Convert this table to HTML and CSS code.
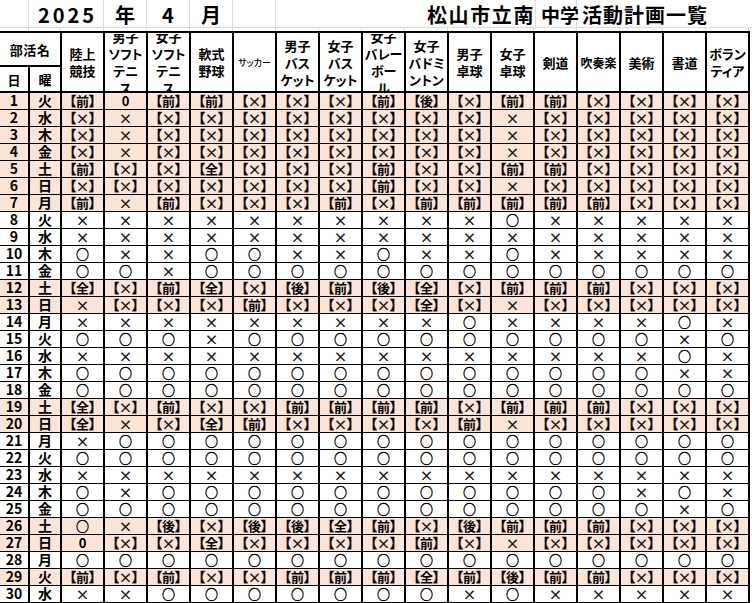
FILE: index.html
```html
<!DOCTYPE html>
<html lang="ja">
<head>
<meta charset="utf-8">
<title>松山市立南中学 活動計画一覧</title>
<link rel="stylesheet" href="styles.css">
</head>
<body>
<div class="title">
  <div></div>
  <div class="yr">2025</div>
  <div>年</div>
  <div>4</div>
  <div>月</div>
  <div></div>
  <div class="school">松山市立南</div>
  <div class="mid">中学</div>
  <div class="plan-name">活動計画一覧</div>
</div>
<div class="spacer"><div></div><div></div><div></div><div></div><div></div><div></div><div></div><div></div><div></div><div></div><div></div><div></div><div></div><div></div><div></div><div></div><div></div><div></div></div>
<table class="plan">
<colgroup><col class="c-day"><col class="c-wd"><col span="16" class="c-club"></colgroup>
<thead>
<tr class="r1">
<th colspan="2" class="club-label">部活名</th>
<th rowspan="2"><div class="h"><span>陸上<br>競技</span></div></th>
<th rowspan="2"><div class="h"><span>男子<br>ソフト<br>テニ<br>ス</span></div></th>
<th rowspan="2"><div class="h"><span>女子<br>ソフト<br>テニ<br>ス</span></div></th>
<th rowspan="2"><div class="h"><span>軟式<br>野球</span></div></th>
<th rowspan="2"><div class="h"><span class="tiny">サッカー</span></div></th>
<th rowspan="2"><div class="h"><span>男子<br>バス<br>ケット</span></div></th>
<th rowspan="2"><div class="h"><span>女子<br>バス<br>ケット</span></div></th>
<th rowspan="2"><div class="h"><span>女子<br>バレー<br>ボー<br>ル</span></div></th>
<th rowspan="2"><div class="h"><span>女子<br>バドミ<br>ントン</span></div></th>
<th rowspan="2"><div class="h"><span>男子<br>卓球</span></div></th>
<th rowspan="2"><div class="h"><span>女子<br>卓球</span></div></th>
<th rowspan="2"><div class="h"><span>剣道</span></div></th>
<th rowspan="2"><div class="h"><span class="small">吹奏楽</span></div></th>
<th rowspan="2"><div class="h"><span>美術</span></div></th>
<th rowspan="2"><div class="h"><span>書道</span></div></th>
<th rowspan="2"><div class="h"><span>ボラン<br>ティア</span></div></th>
</tr>
<tr class="r2"><th>日</th><th>曜</th></tr>
</thead>
<tbody>
<tr class="hol"><td class="d">1</td><td class="d">火</td><td>【<b>前</b>】</td><td><b>0</b></td><td>【<b>前</b>】</td><td>【<b>前</b>】</td><td>【×】</td><td>【×】</td><td>【×】</td><td>【<b>前</b>】</td><td>【<b>後</b>】</td><td>【×】</td><td>【<b>前</b>】</td><td>【<b>前</b>】</td><td>【×】</td><td>【×】</td><td>【×】</td><td>【×】</td></tr>
<tr class="hol"><td class="d">2</td><td class="d">水</td><td>【×】</td><td>×</td><td>【×】</td><td>【×】</td><td>【×】</td><td>【×】</td><td>【×】</td><td>【×】</td><td>【×】</td><td>【×】</td><td>×</td><td>【×】</td><td>【×】</td><td>【×】</td><td>【×】</td><td>【×】</td></tr>
<tr class="hol"><td class="d">3</td><td class="d">木</td><td>【×】</td><td>×</td><td>【×】</td><td>【×】</td><td>【×】</td><td>【×】</td><td>【×】</td><td>【×】</td><td>【×】</td><td>【×】</td><td>×</td><td>【×】</td><td>【×】</td><td>【×】</td><td>【×】</td><td>【×】</td></tr>
<tr class="hol"><td class="d">4</td><td class="d">金</td><td>【×】</td><td>×</td><td>【×】</td><td>【×】</td><td>【×】</td><td>【×】</td><td>【×】</td><td>【×】</td><td>【×】</td><td>【×】</td><td>×</td><td>【×】</td><td>【×】</td><td>【×】</td><td>【×】</td><td>【×】</td></tr>
<tr class="hol"><td class="d">5</td><td class="d">土</td><td>【<b>前</b>】</td><td>【×】</td><td>【×】</td><td>【<b>全</b>】</td><td>【×】</td><td>【×】</td><td>【×】</td><td>【<b>前</b>】</td><td>【×】</td><td>【×】</td><td>【<b>前</b>】</td><td>【<b>前</b>】</td><td>【×】</td><td>【×】</td><td>【×】</td><td>【×】</td></tr>
<tr class="hol"><td class="d">6</td><td class="d">日</td><td>【×】</td><td>【×】</td><td>【×】</td><td>【×】</td><td>【×】</td><td>【×】</td><td>【×】</td><td>【<b>前</b>】</td><td>【×】</td><td>【×】</td><td>×</td><td>【×】</td><td>【×】</td><td>【×】</td><td>【×】</td><td>【×】</td></tr>
<tr class="hol"><td class="d">7</td><td class="d">月</td><td>【<b>前</b>】</td><td>×</td><td>【<b>前</b>】</td><td>【×】</td><td>【×】</td><td>【×】</td><td>【<b>前</b>】</td><td>【×】</td><td>【<b>前</b>】</td><td>【<b>前</b>】</td><td>【<b>前</b>】</td><td>【<b>前</b>】</td><td>【<b>前</b>】</td><td>【×】</td><td>【×】</td><td>【×】</td></tr>
<tr><td class="d">8</td><td class="d">火</td><td>×</td><td>×</td><td>×</td><td>×</td><td>×</td><td>×</td><td>×</td><td>×</td><td>×</td><td>×</td><td>○</td><td>×</td><td>×</td><td>×</td><td>×</td><td>×</td></tr>
<tr><td class="d">9</td><td class="d">水</td><td>×</td><td>×</td><td>×</td><td>×</td><td>×</td><td>×</td><td>×</td><td>×</td><td>×</td><td>×</td><td>×</td><td>×</td><td>×</td><td>×</td><td>×</td><td>×</td></tr>
<tr><td class="d">10</td><td class="d">木</td><td>○</td><td>×</td><td>×</td><td>○</td><td>○</td><td>×</td><td>×</td><td>○</td><td>×</td><td>×</td><td>○</td><td>×</td><td>×</td><td>×</td><td>×</td><td>×</td></tr>
<tr><td class="d">11</td><td class="d">金</td><td>○</td><td>○</td><td>×</td><td>○</td><td>○</td><td>○</td><td>○</td><td>○</td><td>○</td><td>○</td><td>○</td><td>○</td><td>○</td><td>○</td><td>○</td><td>○</td></tr>
<tr class="hol"><td class="d">12</td><td class="d">土</td><td>【<b>全</b>】</td><td>【×】</td><td>【<b>前</b>】</td><td>【<b>全</b>】</td><td>【×】</td><td>【<b>後</b>】</td><td>【<b>前</b>】</td><td>【<b>後</b>】</td><td>【<b>全</b>】</td><td>【×】</td><td>【<b>前</b>】</td><td>【<b>前</b>】</td><td>【<b>前</b>】</td><td>【×】</td><td>【×】</td><td>【×】</td></tr>
<tr class="hol"><td class="d">13</td><td class="d">日</td><td>×</td><td>【×】</td><td>【×】</td><td>【×】</td><td>【<b>前</b>】</td><td>【×】</td><td>【×】</td><td>【×】</td><td>【<b>全</b>】</td><td>【×】</td><td>×</td><td>【×】</td><td>【×】</td><td>【×】</td><td>【×】</td><td>【×】</td></tr>
<tr><td class="d">14</td><td class="d">月</td><td>×</td><td>×</td><td>×</td><td>×</td><td>×</td><td>×</td><td>×</td><td>×</td><td>×</td><td>○</td><td>×</td><td>×</td><td>×</td><td>×</td><td>○</td><td>×</td></tr>
<tr><td class="d">15</td><td class="d">火</td><td>○</td><td>○</td><td>○</td><td>×</td><td>○</td><td>○</td><td>○</td><td>○</td><td>○</td><td>○</td><td>○</td><td>○</td><td>○</td><td>○</td><td>×</td><td>○</td></tr>
<tr><td class="d">16</td><td class="d">水</td><td>×</td><td>×</td><td>×</td><td>×</td><td>×</td><td>×</td><td>×</td><td>×</td><td>×</td><td>×</td><td>×</td><td>×</td><td>×</td><td>×</td><td>○</td><td>×</td></tr>
<tr><td class="d">17</td><td class="d">木</td><td>○</td><td>○</td><td>○</td><td>○</td><td>○</td><td>○</td><td>○</td><td>○</td><td>○</td><td>○</td><td>○</td><td>○</td><td>○</td><td>○</td><td>×</td><td>×</td></tr>
<tr><td class="d">18</td><td class="d">金</td><td>○</td><td>○</td><td>○</td><td>○</td><td>○</td><td>○</td><td>○</td><td>○</td><td>○</td><td>○</td><td>○</td><td>○</td><td>○</td><td>○</td><td>○</td><td>○</td></tr>
<tr class="hol"><td class="d">19</td><td class="d">土</td><td>【<b>全</b>】</td><td>【×】</td><td>【<b>前</b>】</td><td>【×】</td><td>【×】</td><td>【<b>前</b>】</td><td>【<b>前</b>】</td><td>【<b>前</b>】</td><td>【<b>前</b>】</td><td>【×】</td><td>【<b>前</b>】</td><td>【<b>前</b>】</td><td>【<b>前</b>】</td><td>【×】</td><td>【×】</td><td>【×】</td></tr>
<tr class="hol"><td class="d">20</td><td class="d">日</td><td>【<b>全</b>】</td><td>×</td><td>【×】</td><td>【<b>全</b>】</td><td>【<b>前</b>】</td><td>【×】</td><td>【×】</td><td>【×】</td><td>【×】</td><td>【<b>前</b>】</td><td>×</td><td>【×】</td><td>【×】</td><td>【×】</td><td>【×】</td><td>【×】</td></tr>
<tr><td class="d">21</td><td class="d">月</td><td>×</td><td>○</td><td>○</td><td>○</td><td>○</td><td>○</td><td>○</td><td>○</td><td>○</td><td>○</td><td>○</td><td>○</td><td>○</td><td>○</td><td>○</td><td>○</td></tr>
<tr><td class="d">22</td><td class="d">火</td><td>○</td><td>○</td><td>○</td><td>○</td><td>○</td><td>○</td><td>○</td><td>○</td><td>○</td><td>○</td><td>○</td><td>○</td><td>○</td><td>○</td><td>○</td><td>○</td></tr>
<tr><td class="d">23</td><td class="d">水</td><td>×</td><td>×</td><td>×</td><td>×</td><td>×</td><td>×</td><td>×</td><td>×</td><td>×</td><td>×</td><td>×</td><td>×</td><td>×</td><td>×</td><td>×</td><td>×</td></tr>
<tr><td class="d">24</td><td class="d">木</td><td>○</td><td>×</td><td>○</td><td>○</td><td>○</td><td>○</td><td>○</td><td>○</td><td>○</td><td>○</td><td>○</td><td>○</td><td>○</td><td>×</td><td>○</td><td>×</td></tr>
<tr><td class="d">25</td><td class="d">金</td><td>○</td><td>○</td><td>○</td><td>○</td><td>○</td><td>○</td><td>○</td><td>○</td><td>○</td><td>○</td><td>○</td><td>○</td><td>○</td><td>○</td><td>×</td><td>○</td></tr>
<tr class="hol"><td class="d">26</td><td class="d">土</td><td>○</td><td>×</td><td>【<b>後</b>】</td><td>【×】</td><td>【<b>後</b>】</td><td>【<b>後</b>】</td><td>【<b>全</b>】</td><td>【<b>前</b>】</td><td>【×】</td><td>【<b>後</b>】</td><td>【<b>前</b>】</td><td>【<b>前</b>】</td><td>【<b>前</b>】</td><td>【×】</td><td>【×】</td><td>【×】</td></tr>
<tr class="hol"><td class="d">27</td><td class="d">日</td><td><b>0</b></td><td>【×】</td><td>【×】</td><td>【<b>全</b>】</td><td>【×】</td><td>【×】</td><td>【×】</td><td>【×】</td><td>【<b>前</b>】</td><td>【×】</td><td>×</td><td>【×】</td><td>【×】</td><td>【×】</td><td>【×】</td><td>【×】</td></tr>
<tr><td class="d">28</td><td class="d">月</td><td>○</td><td>○</td><td>○</td><td>○</td><td>○</td><td>○</td><td>○</td><td>○</td><td>○</td><td>○</td><td>○</td><td>○</td><td>○</td><td>○</td><td>○</td><td>○</td></tr>
<tr class="hol"><td class="d">29</td><td class="d">火</td><td>【<b>前</b>】</td><td>【×】</td><td>【<b>前</b>】</td><td>【×】</td><td>【×】</td><td>【<b>前</b>】</td><td>【<b>前</b>】</td><td>【<b>前</b>】</td><td>【<b>全</b>】</td><td>【<b>前</b>】</td><td>【<b>後</b>】</td><td>【<b>前</b>】</td><td>【<b>前</b>】</td><td>【×】</td><td>【×】</td><td>【×】</td></tr>
<tr><td class="d">30</td><td class="d">水</td><td>×</td><td>×</td><td>○</td><td>○</td><td>○</td><td>○</td><td>○</td><td>○</td><td>○</td><td>×</td><td>○</td><td>×</td><td>×</td><td>×</td><td>×</td><td>×</td></tr>
</tbody>
</table>
</body>
</html>
```

FILE: styles.css
```css
* { box-sizing: border-box; }
html, body { margin: 0; padding: 0; background: #fff; }
body {
  width: 752px;
  height: 603px;
  overflow: hidden;
  color: #000;
  font-family: "Noto Sans CJK JP", "Noto Sans", sans-serif;
}

/* title row */
.title {
  display: grid;
  grid-template-columns: 29px 75px 43px 43px 43px 43px 260px 41px 172px;
  height: 28px;
  border-bottom: 1px solid #dcdcdc;
}
.title > div {
  border-right: 1px solid #dcdcdc;
  display: flex;
  align-items: center;
  justify-content: center;
  font-weight: 700;
  font-size: 20px;
  white-space: nowrap;
  overflow: visible;
}
.title .yr { letter-spacing: 3px; padding-left: 3px; }
.title .school { justify-content: flex-end; letter-spacing: 1.6px; padding-right: 0; }
.title .mid { font-size: 19px; justify-content: flex-start; padding-left: 5px; }
.title .plan-name { justify-content: flex-start; padding-left: 5px; letter-spacing: 1px; border-right: 0; }

.spacer {
  display: grid;
  grid-template-columns: 29px 32px repeat(16, 43px);
  height: 3px;
}
.spacer > div { border-right: 1px solid #dcdcdc; }

/* plan table */
.plan {
  border-collapse: collapse;
  table-layout: fixed;
  width: 749px;
  font-feature-settings: "palt";
}
.c-day { width: 29px; }
.c-wd { width: 32px; }
.c-club { width: 43px; }

.plan th {
  border: 2px solid #000;
  padding: 0;
  font-weight: 700;
  font-size: 13px;
  line-height: 17px;
  background: #fff;
}
.plan th:first-child { border-left: 0; }
.plan .r1 th { height: 34px; }
.plan .r1 .club-label { border-bottom: 1px solid #000; font-size: 13px; letter-spacing: 0.5px; }
.plan .r2 th { height: 26px; font-size: 13px; }
.plan th .h {
  height: 57px;
  display: flex;
  flex-direction: column;
  justify-content: center;
  align-items: center;
  overflow: hidden;
}
.plan th .h span { display: block; text-align: center; white-space: nowrap; }
.plan th .h .tiny { font-size: 9px; font-weight: 500; }
.plan th .h .small { font-size: 12px; }

.plan td {
  height: 17px;
  padding: 0;
  border-left: 2px solid #000;
  border-right: 2px solid #000;
  border-top: 1px solid #000;
  border-bottom: 1px solid #000;
  text-align: center;
  font-size: 13px;
  line-height: 15px;
  white-space: nowrap;
  overflow: hidden;
  background: #fff;
  -webkit-text-stroke: 0.4px #000;
}
.plan td:first-child { border-left: 0; }
.plan tr.hol td { background: #fce4d6; }
.plan td.d { font-weight: 700; font-size: 14px; -webkit-text-stroke: 0; }
.plan td b { font-weight: 700; -webkit-text-stroke: 0; }
```
